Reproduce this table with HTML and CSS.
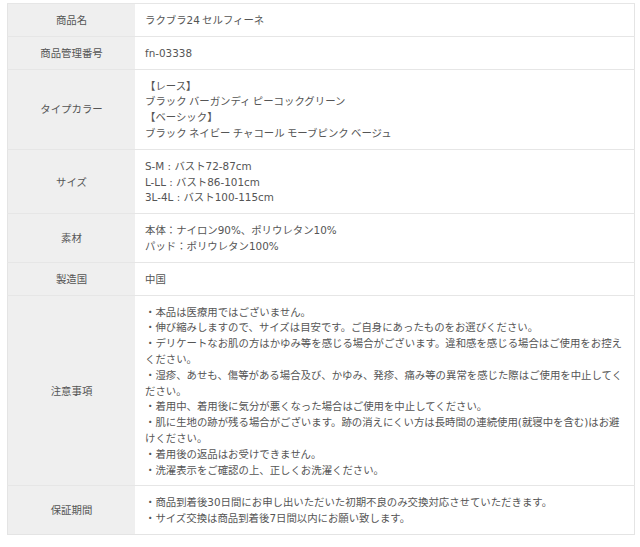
FILE: index.html
```html
<!DOCTYPE html>
<html lang="ja">
<head>
<meta charset="utf-8">
<title>商品仕様</title>
<link rel="stylesheet" href="styles.css">
</head>
<body>
<table class="spec">
  <tbody>
    <tr><th>商品名</th><td>ラクブラ<span class="lat">24</span> セルフィーネ</td></tr>
    <tr><th>商品管理番号</th><td><span class="lat">fn-03338</span></td></tr>
    <tr><th>タイプカラー</th><td>【レース】<br>ブラック バーガンディ ピーコックグリーン<br>【ベーシック】<br>ブラック ネイビー チャコール モーブピンク ベージュ</td></tr>
    <tr><th>サイズ</th><td><span class="lat">S-M : </span>バスト<span class="lat">72-87cm</span><br><span class="lat">L-LL : </span>バスト<span class="lat">86-101cm</span><br><span class="lat">3L-4L : </span>バスト<span class="lat">100-115cm</span></td></tr>
    <tr><th>素材</th><td>本体：ナイロン<span class="lat">90%</span>、ポリウレタン<span class="lat">10%</span><br>パッド：ポリウレタン<span class="lat">100%</span></td></tr>
    <tr><th>製造国</th><td>中国</td></tr>
    <tr><th>注意事項</th><td>・本品は医療用ではございません。<br>・伸び縮みしますので、サイズは目安です。ご自身にあったものをお選びください。<br>・デリケートなお肌の方はかゆみ等を感じる場合がございます。違和感を感じる場合はご使用をお控えください。<br>・湿疹、あせも、傷等がある場合及び、かゆみ、発疹、痛み等の異常を感じた際はご使用を中止してください。<br>・着用中、着用後に気分が悪くなった場合はご使用を中止してください。<br>・肌に生地の跡が残る場合がございます。跡の消えにくい方は長時間の連続使用<span class="lat">(</span>就寝中を含む<span class="lat">)</span>はお避けください。<br>・着用後の返品はお受けできません。<br>・洗濯表示をご確認の上、正しくお洗濯ください。</td></tr>
    <tr><th>保証期間</th><td>・商品到着後<span class="lat">30</span>日間にお申し出いただいた初期不良のみ交換対応させていただきます。<br>・サイズ交換は商品到着後<span class="lat">7</span>日間以内にお願い致します。</td></tr>
  </tbody>
</table>
</body>
</html>
```
FILE: styles.css
```css
html, body {
  background: #ffffff;
}
body {
  margin: 3px 5px 0 7px;
  font-family: "Noto Sans CJK JP", sans-serif;
  font-size: 10.4px;
  line-height: 15.8px;
  color: #555555;
}
.lat {
  font-family: "DejaVu Sans", "Noto Sans CJK JP", sans-serif;
  line-height: 1;
}
.spec {
  width: 628px;
  border-collapse: collapse;
  border: 1px solid #e4e4e4;
  box-shadow: 0 0 2px rgba(0, 0, 0, 0.08);
  table-layout: fixed;
}
.spec th,
.spec td {
  border-top: 1px solid #e6e6e6;
  padding: 8px 10px;
  vertical-align: middle;
}
.spec th {
  width: 107px;
  background: #efefef;
  font-weight: normal;
  text-align: center;
}
.spec td {
  background: #ffffff;
  text-align: left;
  line-break: strict;
}
```
